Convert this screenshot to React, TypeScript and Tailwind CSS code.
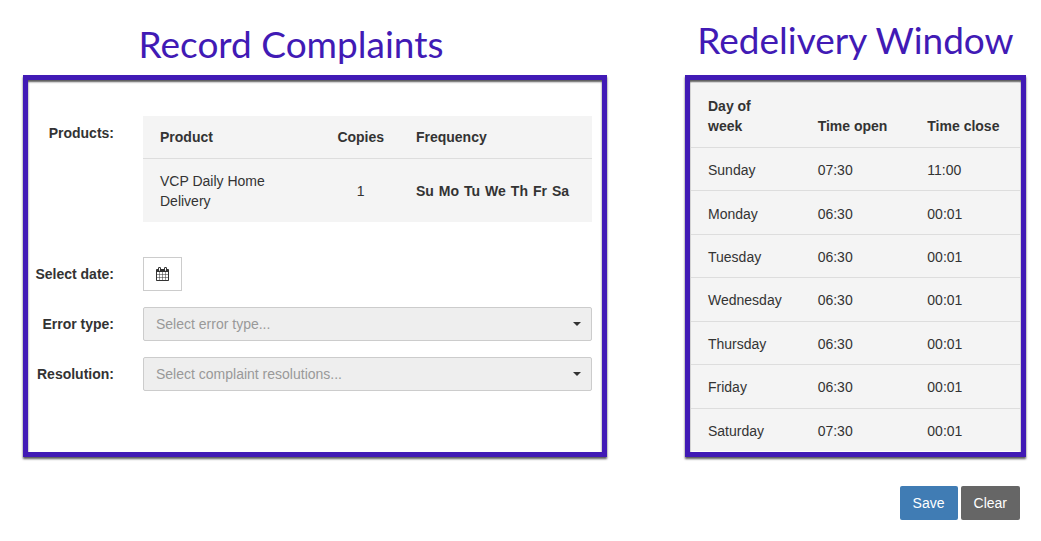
import type { ReactNode } from "react";

const windows = [
  { day: "Sunday", open: "07:30", close: "11:00" },
  { day: "Monday", open: "06:30", close: "00:01" },
  { day: "Tuesday", open: "06:30", close: "00:01" },
  { day: "Wednesday", open: "06:30", close: "00:01" },
  { day: "Thursday", open: "06:30", close: "00:01" },
  { day: "Friday", open: "06:30", close: "00:01" },
  { day: "Saturday", open: "07:30", close: "00:01" },
];

const deliveryDays = ["Su", "Mo", "Tu", "We", "Th", "Fr", "Sa"];

function CalendarIcon() {
  return (
    <svg viewBox="0 0 1664 1792" className="h-[14px] w-[13px]" fill="currentColor" aria-hidden="true">
      <path d="M128 1664h288v-288h-288v288zm352 0h320v-288h-320v288zm-352-352h288v-320h-288v320zm352 0h320v-320h-320v320zm-352-384h288v-288h-288v288zm736 736h320v-288h-320v288zm-384-736h320v-288h-320v288zm768 736h288v-288h-288v288zm-384-352h320v-320h-320v320zm-352-864v-288q0-13-9.5-22.5t-22.5-9.5h-64q-13 0-22.5 9.5t-9.5 22.5v288q0 13 9.5 22.5t22.5 9.5h64q13 0 22.5-9.5t9.5-22.5zm736 864h288v-320h-288v320zm-384-384h320v-288h-320v288zm384 0h288v-288h-288v288zm32-480v-288q0-13-9.5-22.5t-22.5-9.5h-64q-13 0-22.5 9.5t-9.5 22.5v288q0 13 9.5 22.5t22.5 9.5h64q13 0 22.5-9.5t9.5-22.5zm384-64v1280q0 52-38 90t-90 38h-1408q-52 0-90-38t-38-90v-1280q0-52 38-90t90-38h128v-96q0-66 47-113t113-47h64q66 0 113 47t47 113v96h384v-96q0-66 47-113t113-47h64q66 0 113 47t47 113v96h128q52 0 90 38t38 90z" />
    </svg>
  );
}

function Panel({ children }: { children: ReactNode }) {
  return (
    <div className="flex flex-1 flex-col border-5 border-[#411ab5] shadow-[0_2px_2px_rgba(0,0,0,0.65),inset_0_2px_2px_rgba(0,0,0,0.65)]">
      {children}
    </div>
  );
}

function Select({ id, placeholder }: { id: string; placeholder: string }) {
  return (
    <div className="relative">
      <select
        id={id}
        disabled
        className="block h-[34px] w-full appearance-none rounded-xs border border-[#ccc] bg-[#eee] px-3 text-[#999] opacity-100"
      >
        <option>{placeholder}</option>
      </select>
      <svg viewBox="0 0 8 4" className="pointer-events-none absolute top-[15px] right-[11px] h-1 w-2" aria-hidden="true">
        <path d="M0 0h8L4 4z" fill="#333" />
      </svg>
    </div>
  );
}

export default function App() {
  return (
    <main className="bg-white pt-4 pr-[15px] pb-5 pl-[23px] font-['Liberation_Sans',Arial,sans-serif] text-sm leading-5 text-[#333]">
      <div className="grid grid-cols-[584fr_341fr] gap-x-[78px]">
        <section className="flex min-w-0 flex-col">
          <h1 className="flex h-[59px] items-center justify-center pr-12 pb-1 font-['Lato',sans-serif] text-[37px] leading-none whitespace-nowrap text-[#411ab5]">
            Record Complaints
          </h1>
          <Panel>
            <div className="grid grid-cols-[86px_1fr] gap-x-[29px] gap-y-4 pt-9 pr-[10px] pb-[61px]">
              <div id="products-label" className="pt-[7px] text-right font-bold">
                Products:
              </div>
              <table aria-labelledby="products-label" className="mb-[19px] w-full table-fixed bg-[#f4f4f4]">
                <thead>
                  <tr className="border-b border-[#ddd]">
                    <th className="w-[40%] px-[17px] py-[11px] text-left">Product</th>
                    <th className="w-[17%] py-[11px] text-center">Copies</th>
                    <th className="px-[17px] py-[11px] text-left">Frequency</th>
                  </tr>
                </thead>
                <tbody>
                  <tr>
                    <td className="px-[17px] pt-3 pb-[11px]">VCP Daily Home Delivery</td>
                    <td className="pt-3 pb-[11px] text-center">1</td>
                    <td className="pt-3 pb-[11px] pl-[17px] font-bold">
                      <div className="flex gap-[5px]">
                        {deliveryDays.map((day) => (
                          <span key={day}>{day}</span>
                        ))}
                      </div>
                    </td>
                  </tr>
                </tbody>
              </table>

              <label htmlFor="date" className="self-center text-right font-bold whitespace-nowrap">
                Select date:
              </label>
              <button
                id="date"
                type="button"
                className="flex h-[34px] w-[39px] items-center justify-center border border-[#ccc] bg-white"
              >
                <CalendarIcon />
              </button>

              <label htmlFor="error-type" className="self-center text-right font-bold">
                Error type:
              </label>
              <Select id="error-type" placeholder="Select error type..." />

              <label htmlFor="resolution" className="self-center text-right font-bold">
                Resolution:
              </label>
              <Select id="resolution" placeholder="Select complaint resolutions..." />
            </div>
          </Panel>
        </section>

        <section className="flex min-w-0 flex-col">
          <h1 className="flex h-[59px] items-center justify-center pb-3 font-['Lato',sans-serif] text-[37px] leading-none whitespace-nowrap text-[#411ab5]">
            Redelivery Window
          </h1>
          <Panel>
            <div className="flex flex-1 flex-col px-px pt-[3px] pb-px">
              <table className="w-full flex-1 table-fixed bg-[#f4f4f4]">
                <thead>
                  <tr className="border-b border-[#ddd] text-left align-bottom">
                    <th className="px-[17px] pt-[13px] pb-[11px]">Day of week</th>
                    <th className="pt-[13px] pb-[11px] pl-[17px]">Time open</th>
                    <th className="pt-[13px] pb-[11px] pl-[17px]">Time close</th>
                  </tr>
                </thead>
                <tbody>
                  {windows.map((row) => (
                    <tr key={row.day} className="border-b border-[#ddd] last:border-b-0">
                      <td className="pt-3 pb-[10px] pl-[17px]">{row.day}</td>
                      <td className="pt-3 pb-[10px] pl-[17px]">{row.open}</td>
                      <td className="pt-3 pb-[10px] pl-[17px]">{row.close}</td>
                    </tr>
                  ))}
                </tbody>
              </table>
            </div>
          </Panel>
        </section>
      </div>

      <div className="mt-[29px] flex justify-end gap-[3px] pr-[6px]">
        <button type="button" className="h-[34px] rounded-xs bg-[#407cb4] px-[13px] text-white">
          Save
        </button>
        <button type="button" className="h-[34px] rounded-xs bg-[#666] px-[13px] text-white">
          Clear
        </button>
      </div>
    </main>
  );
}
